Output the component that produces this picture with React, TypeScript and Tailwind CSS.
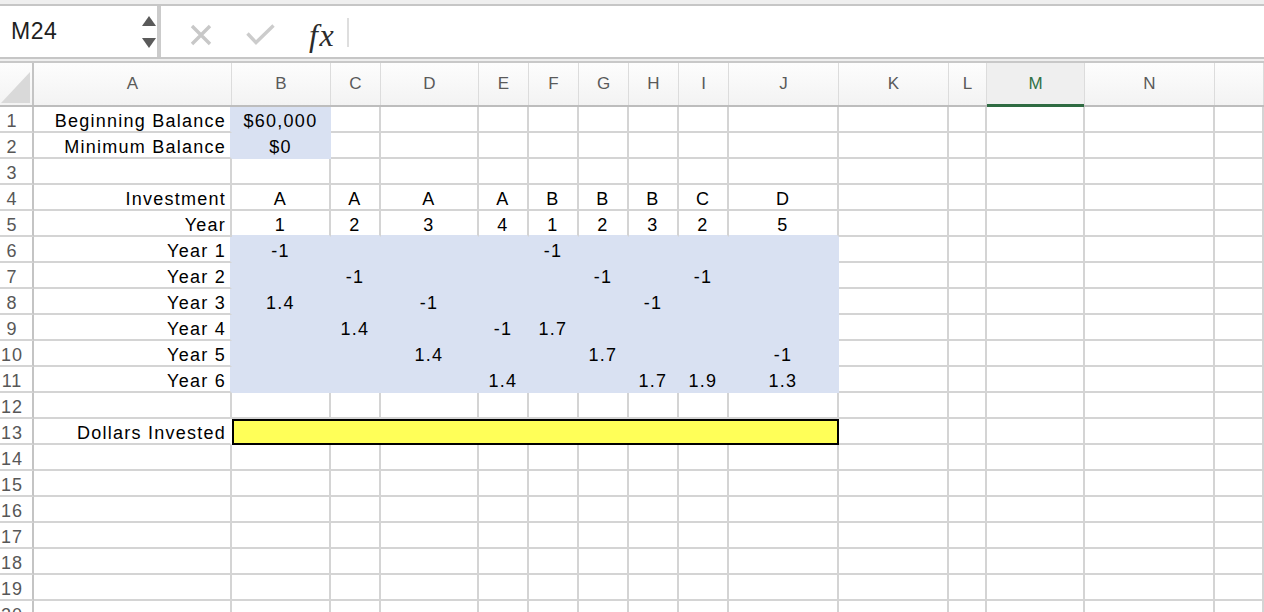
import React from 'react';

const COLS: { id: string; w: string }[] = [
  { id: 'A', w: 'w-[198px]' },
  { id: 'B', w: 'w-[99px]' },
  { id: 'C', w: 'w-[50px]' },
  { id: 'D', w: 'w-[98px]' },
  { id: 'E', w: 'w-[50px]' },
  { id: 'F', w: 'w-[50px]' },
  { id: 'G', w: 'w-[50px]' },
  { id: 'H', w: 'w-[50px]' },
  { id: 'I', w: 'w-[50px]' },
  { id: 'J', w: 'w-[110px]' },
  { id: 'K', w: 'w-[110px]' },
  { id: 'L', w: 'w-[38px]' },
  { id: 'M', w: 'w-[98px]' },
  { id: 'N', w: 'w-[130px]' },
  { id: 'O', w: 'flex-1 min-w-0' },
];

const DATA: Record<number, string[]> = {
  1: ['Beginning Balance', '$60,000'],
  2: ['Minimum Balance', '$0'],
  4: ['Investment', 'A', 'A', 'A', 'A', 'B', 'B', 'B', 'C', 'D'],
  5: ['Year', '1', '2', '3', '4', '1', '2', '3', '2', '5'],
  6: ['Year 1', '-1', '', '', '', '-1'],
  7: ['Year 2', '', '-1', '', '', '', '-1', '', '-1'],
  8: ['Year 3', '1.4', '', '-1', '', '', '', '-1'],
  9: ['Year 4', '', '1.4', '', '-1', '1.7'],
  10: ['Year 5', '', '', '1.4', '', '', '1.7', '', '', '-1'],
  11: ['Year 6', '', '', '', '1.4', '', '', '1.7', '1.9', '1.3'],
  13: ['Dollars Invested'],
};

const shaded = (r: number, c: number) =>
  (r >= 6 && r <= 11 && c >= 1 && c <= 9) || ((r === 1 || r === 2) && c === 1);

function Cell({ r, c }: { r: number; c: number }) {
  const text = (DATA[r] || [])[c] || '';
  const sh = shaded(r, c);
  const br = sh || shaded(r, c + 1) ? 'border-r-[#d9e1f2]' : 'border-r-[#d4d4d4]';
  const bb = sh || shaded(r + 1, c) ? 'border-b-[#d9e1f2]' : 'border-b-[#d4d4d4]';
  const align = c === 0 ? 'justify-end pr-[4px]' : 'justify-center';
  return (
    <div
      className={`${COLS[c].w} ${sh ? 'bg-[#d9e1f2]' : 'bg-white'} ${br} ${bb} ${align} h-[26px] shrink-0 border-r-2 border-b-2 flex items-start pt-[5px] leading-[19px] whitespace-nowrap text-[18px] tracking-[1.25px] text-black`}
    >
      {text}
    </div>
  );
}

function RowHeader({ n }: { n: number }) {
  return (
    <div className="w-[34px] h-[26px] shrink-0 border-r-2 border-r-[#c4c4c4] border-b-2 border-b-[#d4d4d4] bg-white flex items-start pt-[5px] leading-[19px] text-[18px] tracking-[1px] text-[#575757]">
      <span className="w-[24px] text-center">{n}</span>
    </div>
  );
}

function Row({ r }: { r: number }) {
  if (r === 13) {
    return (
      <div className="flex">
        <RowHeader n={r} />
        <div className="w-[198px] h-[26px] shrink-0 border-r-2 border-r-white border-b-2 border-b-[#d4d4d4] bg-white flex items-start justify-end pr-[4px] pt-[5px] leading-[19px] whitespace-nowrap text-[18px] tracking-[1.25px] text-black">
          {DATA[13][0]}
        </div>
        <div className="w-[607px] h-[26px] shrink-0 border-2 border-black bg-[#ffff58]" />
        {COLS.slice(10).map((col, i) => (
          <Cell key={col.id} r={r} c={i + 10} />
        ))}
      </div>
    );
  }
  return (
    <div className="flex">
      <RowHeader n={r} />
      {COLS.map((col, i) => (
        <Cell key={col.id} r={r} c={i} />
      ))}
    </div>
  );
}

export default function App() {
  const rows = Array.from({ length: 20 }, (_, i) => i + 1);
  return (
    <div className="h-[612px] w-[1264px] overflow-hidden bg-white font-['Liberation_Sans',Arial,sans-serif]">
      {/* Formula bar */}
      <div className="bg-[#efefef] pt-[4px] pb-[2px]">
        <div className="flex h-[55px] border-y-2 border-[#c6c6c6] bg-white">
          <div className="w-[161px] shrink-0 border-r-4 border-[#cbcbcb] flex items-center pl-[11px] pr-[1px]">
            <span className="flex-1 text-[23px] tracking-[0.5px] text-[#1f1f1f]">M24</span>
            <svg width="14" height="32" viewBox="0 0 14 32">
              <polygon points="0,10 7,0 14,10" fill="#5a5a5a" />
              <polygon points="0,22 14,22 7,32" fill="#5a5a5a" />
            </svg>
          </div>
          <div className="flex items-center pt-[6px]">
            <svg className="ml-[29px]" width="22" height="22" viewBox="0 0 22 22">
              <path d="M2 2 L20 20 M20 2 L2 20" stroke="#c8c8c8" strokeWidth="3.4" fill="none" />
            </svg>
            <svg className="ml-[34px]" width="29" height="22" viewBox="0 0 29 22">
              <path d="M1.5 9.5 L10 18.5 L27.5 1.5" stroke="#cccccc" strokeWidth="3.4" fill="none" />
            </svg>
            <span className="ml-[34px] text-[32px] leading-none italic text-[#2b2b2b] font-['Liberation_Serif',serif] tracking-[1.5px]">
              fx
            </span>
          </div>
          <div className="ml-[12px] self-center mt-[2px] w-[2px] h-[29px] bg-[#dedede]" />
          <div className="flex-1" />
        </div>
      </div>

      {/* Column headers */}
      <div className="flex h-[46px] border-t-2 border-b-2 border-t-[#c8c8c8] border-b-[#bdbdbd] bg-linear-to-b from-[#fdfdfd] to-[#f3f3f3]">
        <div className="w-[34px] shrink-0 border-r-2 border-[#c4c4c4] relative">
          <svg width="32" height="42" viewBox="0 0 32 42">
            <polygon points="30,9 30,40 1,40" fill="#d9d9d9" />
          </svg>
        </div>
        {COLS.map((col) =>
          col.id === 'M' ? (
            <div
              key={col.id}
              className={`${col.w} shrink-0 relative border-r border-[#dcdcdc] bg-[#efefef] flex items-center justify-center text-[17px] text-[#2f7146]`}
            >
              M
              <div className="absolute left-0 right-0 bottom-[-2px] h-[3px] bg-[#2f6b42]" />
            </div>
          ) : (
            <div
              key={col.id}
              className={`${col.w} shrink-0 border-r border-[#dcdcdc] flex items-center justify-center text-[17px] text-[#5a5a5a]`}
            >
              {col.id === 'O' ? '' : col.id}
            </div>
          )
        )}
      </div>

      {/* Body */}
      <div className="flex flex-col">
        {rows.map((r) => (
          <Row key={r} r={r} />
        ))}
      </div>
    </div>
  );
}
